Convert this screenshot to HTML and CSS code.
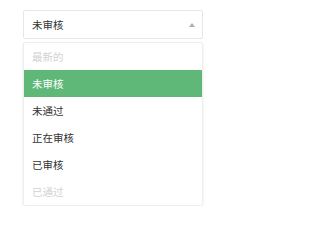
FILE: index.html
```html
<!DOCTYPE html>
<html lang="zh">
<head>
<meta charset="utf-8">
<link rel="stylesheet" href="styles.css">
</head>
<body>
<div class="page">
  <div class="select">
    <div class="select-title">
      <span class="value">未审核</span>
      <i class="edge"></i>
    </div>
    <ul class="options">
      <li class="option disabled">最新的</li>
      <li class="option selected">未审核</li>
      <li class="option">未通过</li>
      <li class="option">正在审核</li>
      <li class="option">已审核</li>
      <li class="option disabled">已通过</li>
    </ul>
  </div>
</div>
</body>
</html>
```
FILE: styles.css
```css
html, body {
  margin: 0;
  padding: 0;
  background: #fff;
}
.page {
  padding: 10px 0 0 23px;
  font-family: "Noto Sans CJK SC", "Noto Sans", sans-serif;
  font-size: 10.5px;
  color: #333;
}
.select {
  width: 180px;
}
.select-title {
  box-sizing: border-box;
  height: 29px;
  border: 1px solid #e6e6e6;
  border-radius: 2px;
  display: flex;
  align-items: center;
  justify-content: space-between;
  padding: 0 7px 0 8px;
}
.edge {
  width: 0;
  height: 0;
  border-left: 3px solid transparent;
  border-right: 3px solid transparent;
  border-bottom: 4px solid #b0b0b0;
  margin-top: 1px;
}
.options {
  list-style: none;
  margin: 3px 0 0 0;
  padding: 0;
  border: 1px solid #eee;
  border-radius: 2px;
  box-shadow: 0 1px 3px rgba(0,0,0,0.08);
}
.option {
  height: 27px;
  line-height: 27px;
  padding: 0 8px;
  color: #333;
}
.option.selected {
  background: #5fb878;
  color: #fff;
}
.option.disabled {
  color: #d2d2d2;
}
```
